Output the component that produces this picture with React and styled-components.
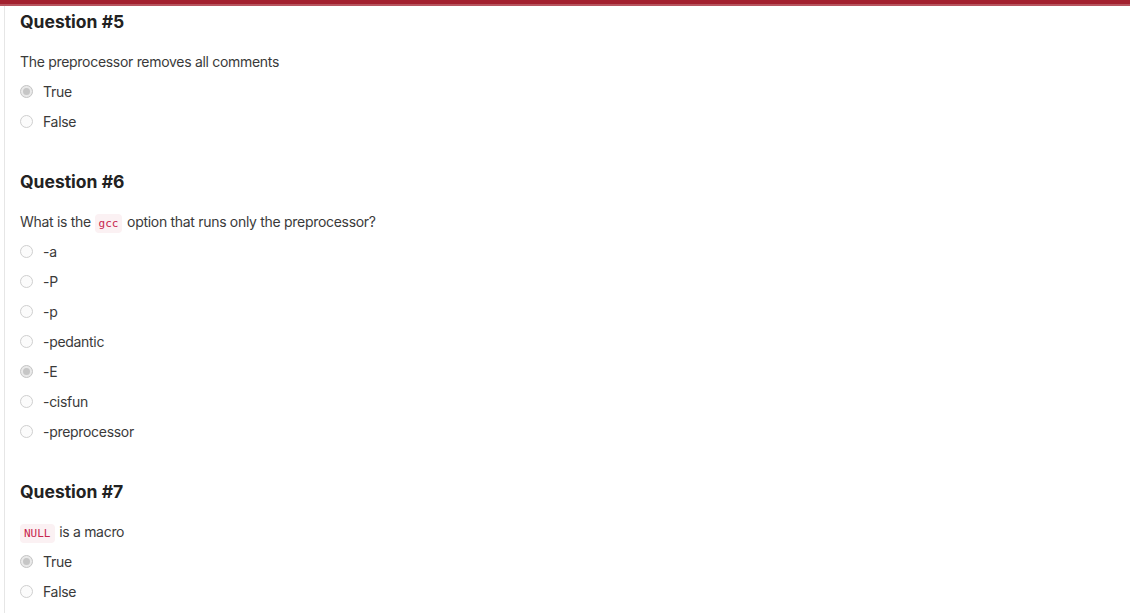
import React from 'react'
import styled, { createGlobalStyle } from 'styled-components'

const Global = createGlobalStyle`
body {
  margin: 0;
  background: #fff;
  font-family: Inter, "Liberation Sans", sans-serif;
  color: #3a3a3a;
}
`

const TopBar = styled.div`
height: 4px;
background: #a3212f;
border-bottom: 2px solid #b7545e;
`

const Page = styled.div`
margin-left: 4px;
border-left: 1px solid #e6e6e6;
padding: 1px 0 20px 15px;
`

const Question = styled.section`
margin-bottom: 31px;
`

const Title = styled.h3`
font-size: 17.5px;
font-weight: 700;
color: #222;
margin: 0;
line-height: 30px;
`

const Prompt = styled.p`
font-size: 14px;
letter-spacing: -0.3px;
margin: 10px 0 0;
height: 30px;
line-height: 30px;
`

const Code = styled.code`
font-family: "DejaVu Sans Mono", "Liberation Mono", monospace;
font-size: 11px;
line-height: 1;
letter-spacing: 0;
color: #c7254e;
background: #fbf1f3;
border-radius: 4px;
padding: 3px 4px;
margin-right: 1px;
`

const Options = styled.ul`
list-style: none;
margin: -1px 0 0;
padding: 0;
`

const Option = styled.li`
display: flex;
align-items: center;
height: 30px;
font-size: 14px;
letter-spacing: -0.3px;
`

const Radio = styled.span`
box-sizing: border-box;
flex: none;
width: 13px;
height: 13px;
border-radius: 50%;
border: 1px solid ${p => (p.checked ? '#c4c4c4' : '#cfcfcf')};
background: ${p => (p.checked ? '#e9e9e9' : '#fbfbfb')};
margin: 1px 10px 0 0;
display: flex;
align-items: center;
justify-content: center;
&::after {
  content: '';
  display: ${p => (p.checked ? 'block' : 'none')};
  width: 7px;
  height: 7px;
  border-radius: 50%;
  background: #c6c6c6;
}
`

const questions = [
  {
    n: 5,
    prompt: <>The preprocessor removes all comments</>,
    options: ['True', 'False'],
    answer: 0,
  },
  {
    n: 6,
    prompt: <>What is the <Code>gcc</Code> option that runs only the preprocessor?</>,
    options: ['-a', '-P', '-p', '-pedantic', '-E', '-cisfun', '-preprocessor'],
    answer: 4,
  },
  {
    n: 7,
    prompt: <><Code>NULL</Code> is a macro</>,
    options: ['True', 'False'],
    answer: 0,
  },
]

export default function App() {
  return (
    <>
      <Global />
      <TopBar />
      <Page>
        {questions.map(q => (
          <Question key={q.n}>
            <Title>Question #{q.n}</Title>
            <Prompt>{q.prompt}</Prompt>
            <Options>
              {q.options.map((o, i) => (
                <Option key={o}>
                  <Radio checked={i === q.answer} />
                  {o}
                </Option>
              ))}
            </Options>
          </Question>
        ))}
      </Page>
    </>
  )
}
